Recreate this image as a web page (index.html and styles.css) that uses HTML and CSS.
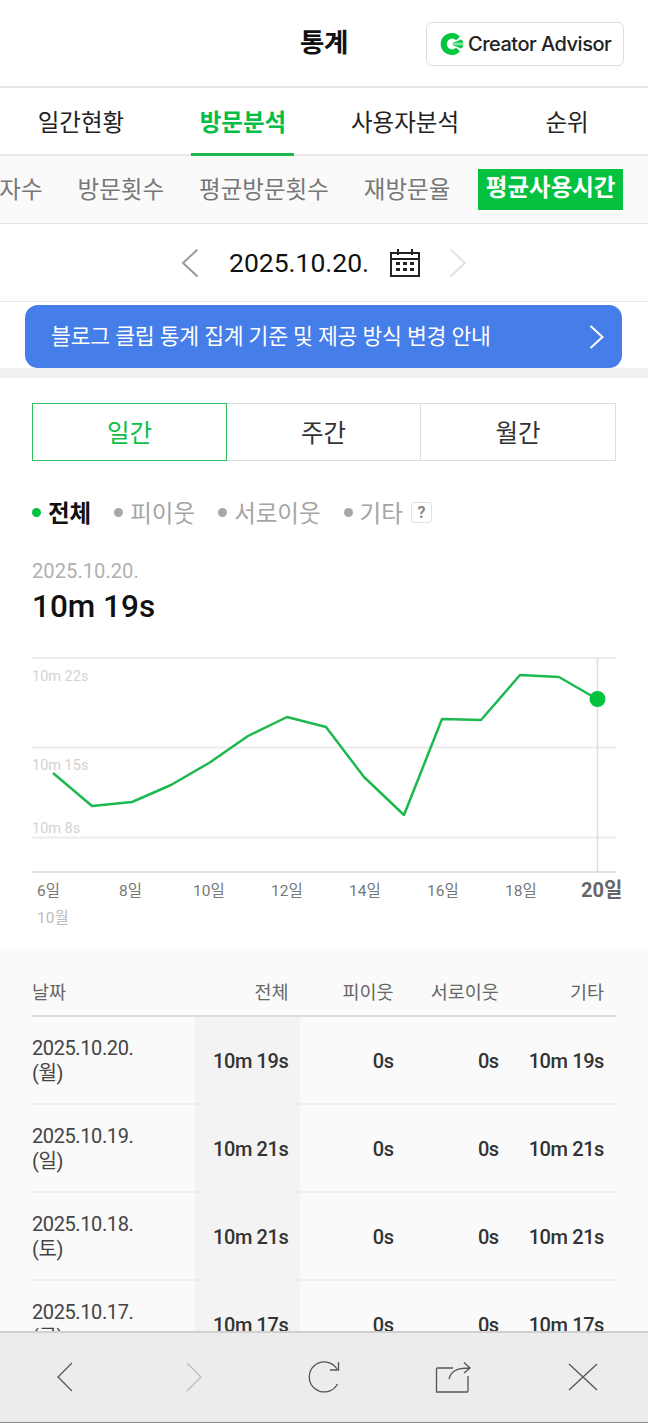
FILE: index.html
```html
<!DOCTYPE html>
<html lang="ko">
<head>
<meta charset="utf-8">
<title>통계</title>
<link rel="stylesheet" href="styles.css">
</head>
<body>
<header class="top">
  <h1 class="title">통계</h1>
  <a class="advisor">
    <svg class="advisor-logo" viewBox="0 0 24 24" width="24" height="24"><path d="M20 4.800A11 11 0 1 0 20 19.200L16 15.800A5.400 5.400 0 1 1 16 8.200Z" fill="#00c73c"/><path d="M12.500 10.800H23V9.400L21.400 7.400ZM12.500 11.500H23.500V12.500H12.500ZM12.500 13.200 21.400 16.600 23 14.600V13.200Z" fill="#00c73c"/></svg>
    <span>Creator Advisor</span>
  </a>
</header>
<nav class="tabs">
  <a class="tab">일간현황</a>
  <a class="tab tab-on">방문분석</a>
  <a class="tab">사용자분석</a>
  <a class="tab">순위</a>
</nav>
<nav class="subtabs">
  <a class="sub">방문자수</a>
  <a class="sub">방문횟수</a>
  <a class="sub">평균방문횟수</a>
  <a class="sub">재방문율</a>
  <a class="sub sub-on">평균사용시간</a>
</nav>
<div class="datebar">
  <svg class="ico-prev" width="18" height="30" viewBox="0 0 18 30"><path d="M16.500 1.500 2 15l14.500 13.500" fill="none" stroke="#9a9a9a" stroke-width="2"/></svg>
  <span class="date">2025.10.20.</span>
  <svg class="ico-cal" width="30" height="29" viewBox="0 0 30 29"><path d="M1 5h28v23H1zM1 11h28M8 1v6M22 1v6" fill="none" stroke="#222" stroke-width="2"/><path d="M6 14h4v3H6zM13 14h4v3h-4zM20 14h4v3h-4zM6 20h4v3H6zM13 20h4v3h-4zM20 20h4v3h-4z" fill="#222"/></svg>
  <svg class="ico-next" width="18" height="30" viewBox="0 0 18 30"><path d="M1.500 1.500 16 15 1.500 28.500" fill="none" stroke="#e2e2e2" stroke-width="2"/></svg>
</div>
<a class="banner">
  <span>블로그 클립 통계 집계 기준 및 제공 방식 변경 안내</span>
  <svg width="15" height="24" viewBox="0 0 15 24"><path d="M1.500 1 13.500 12 1.500 23" fill="none" stroke="#fff" stroke-width="2"/></svg>
</a>
<main class="panel">
  <div class="seg">
    <a class="seg-item seg-on">일간</a>
    <a class="seg-item">주간</a>
    <a class="seg-item">월간</a>
  </div>
  <ul class="legend">
    <li class="leg leg-on">전체</li>
    <li class="leg">피이웃</li>
    <li class="leg">서로이웃</li>
    <li class="leg">기타<span class="help">?</span></li>
  </ul>
  <p class="stat-date">2025.10.20.</p>
  <p class="stat-value">10m 19s</p>
  <svg class="chart" width="648" height="298" viewBox="0 650 648 298">
    <g class="grid">
      <path d="M32 658H616M32 747.500H616M32 837.500H616"/>
    </g>
    <path class="axis" d="M32 872H616"/>
    <path class="cursor" d="M597.500 658V872"/>
    <g class="ylab">
      <text x="32" y="681">10m 22s</text>
      <text x="32" y="770">10m 15s</text>
      <text x="32" y="833">10m 8s</text>
    </g>
    <polyline class="line" points="53,773 92,806 132,802 171,785 209,763 248,736 287,717 326,727 364,777 404,815 442,719 481,720 520,675 559,677 597,699"/>
    <circle class="dot" cx="597.500" cy="699" r="8"/>
    <g class="xlab">
      <text x="37" y="896">6일</text>
      <text x="119" y="896">8일</text>
      <text x="193" y="896">10일</text>
      <text x="271" y="896">12일</text>
      <text x="349" y="896">14일</text>
      <text x="427" y="896">16일</text>
      <text x="505" y="896">18일</text>
    </g>
    <text class="xlab-on" x="581" y="897">20일</text>
    <text class="xlab-month" x="37" y="923">10월</text>
  </svg>
</main>
<section class="stats">
  <table class="table">
    <colgroup><col class="c-date"><col class="c-num"><col class="c-num"><col class="c-num"><col class="c-num"></colgroup>
    <thead>
      <tr><th class="th-date">날짜</th><th>전체</th><th>피이웃</th><th>서로이웃</th><th>기타</th></tr>
    </thead>
    <tbody>
      <tr><td class="td-date">2025.10.20.<br>(월)</td><td class="td-all">10m 19s</td><td>0s</td><td>0s</td><td>10m 19s</td></tr>
      <tr><td class="td-date">2025.10.19.<br>(일)</td><td class="td-all">10m 21s</td><td>0s</td><td>0s</td><td>10m 21s</td></tr>
      <tr><td class="td-date">2025.10.18.<br>(토)</td><td class="td-all">10m 21s</td><td>0s</td><td>0s</td><td>10m 21s</td></tr>
      <tr><td class="td-date">2025.10.17.<br>(금)</td><td class="td-all">10m 17s</td><td>0s</td><td>0s</td><td>10m 17s</td></tr>
    </tbody>
  </table>
</section>
<footer class="toolbar">
  <svg width="18" height="30" viewBox="0 0 18 30"><path d="M16 1 2 15l14 14" fill="none" stroke="#555" stroke-width="1.300"/></svg>
  <svg width="18" height="30" viewBox="0 0 18 30"><path d="M2 1l14 14L2 29" fill="none" stroke="#bbb" stroke-width="1.300"/></svg>
  <svg class="ico-refresh" width="34" height="32" viewBox="0 0 34 32"><path d="M29 8A15 15 0 1 0 29.500 23" fill="none" stroke="#555" stroke-width="1.300"/><path d="M30.500 1V9H22" fill="none" stroke="#555" stroke-width="1.300"/></svg>
  <svg width="36" height="32" viewBox="0 0 36 32"><path d="M18 7H2.500a1 1 0 0 0-1 1V31H32a1 1 0 0 0 1-1V15" fill="none" stroke="#555" stroke-width="1.300"/><path d="M14 18C16 10 22 7 34 7M29 1.500 35 7l-6 5" fill="none" stroke="#555" stroke-width="1.300"/></svg>
  <svg width="30" height="28" viewBox="0 0 30 28"><path d="M1 1l28 26M29 1 1 27" fill="none" stroke="#555" stroke-width="1.300"/></svg>
</footer>
</body>
</html>
```
FILE: styles.css
```css
* { box-sizing: border-box; }
html, body { margin: 0; padding: 0; height: 100%; overflow: hidden; }
body {
  background: #fff;
  color: #111;
  font-family: Roboto, "Noto Sans CJK KR", sans-serif;
}
.top {
  position: relative;
  height: 88px;
  display: flex;
  align-items: center;
  justify-content: center;
  border-bottom: 2px solid #e4e4e4;
}
.title {
  margin: 0 0 6px;
  font-size: 26.500px;
  font-weight: 700;
  letter-spacing: -0.3px;
  color: #111;
}
.advisor {
  position: absolute;
  left: 426px;
  top: 22px;
  width: 198px;
  height: 44px;
  display: flex;
  align-items: center;
  gap: 4px;
  padding-left: 13px;
  border: 1px solid #ddd;
  border-radius: 6px;
  font-family: Inter, sans-serif;
  font-size: 20px;
  font-weight: 500;
  letter-spacing: -0.5px;
  color: #222;
  white-space: nowrap;
}
.tabs {
  height: 68px;
  display: grid;
  grid-template-columns: 162px 162px 162px 162px;
  border-bottom: 2px solid #e8e8e8;
}
.tab {
  position: relative;
  display: flex;
  align-items: center;
  justify-content: center;
  font-size: 23.500px;
  color: #222;
}
.tab-on {
  font-weight: 700;
  color: #03bd49;
}
.tab-on::after {
  content: "";
  position: absolute;
  left: 29px;
  width: 103px;
  bottom: -2px;
  height: 3px;
  background: #1fb84f;
}
.subtabs {
  height: 68px;
  display: flex;
  align-items: center;
  justify-content: flex-end;
  gap: 35px;
  padding-right: 25px;
  background: #fafafa;
  border-bottom: 1px solid #e6e6e6;
  overflow: hidden;
  white-space: nowrap;
}
.sub {
  flex: none;
  margin-bottom: 4px;
  font-size: 23.500px;
  color: #777;
}
.sub-on {
  margin: 0 0 0 -7px;
  padding: 0 7.500px;
  height: 41px;
  line-height: 39px;
  background: #04c13f;
  color: #fff;
  font-weight: 700;
}
.datebar {
  height: 78px;
  display: flex;
  align-items: center;
  border-bottom: 1px solid #e8e8e8;
  padding: 0 0 0 181px;
}
.date {
  margin: 0 21px 0 30px;
  font-size: 26.500px;
  color: #111;
}
.ico-next { margin-left: 29px; }
.banner {
  display: flex;
  align-items: center;
  justify-content: space-between;
  margin: 3px 26px 0 25px;
  height: 63px;
  padding: 0 18px 0 26px;
  border-radius: 13px;
  background: #457de9;
  color: #fff;
  font-size: 21.600px;
  letter-spacing: -0.2px;
}
.banner span { margin-bottom: 4px; }
.panel {
  height: 580px;
  border-top: 10px solid #f0f0f0;
  padding-top: 25px;
}
.seg {
  display: grid;
  grid-template-columns: 195px 194px 195px;
  margin: 0 32px;
  height: 58px;
}
.seg-item {
  display: flex;
  align-items: center;
  justify-content: center;
  padding-bottom: 2px;
  border: 1.500px solid #dcdcdc;
  border-left-width: 0;
  font-size: 24.500px;
  color: #333;
}
.seg-on {
  border: 1.500px solid #2fc05c;
  color: #0cbf47;
}
.legend {
  display: flex;
  margin: 31px 0 0 32px;
  padding: 0;
  list-style: none;
  height: 40px;
  align-items: center;
  gap: 23px;
}
.leg {
  display: flex;
  align-items: center;
  font-size: 23.500px;
  color: #a5a5a5;
}
.leg::before {
  content: "";
  width: 9px;
  height: 9px;
  margin-right: 7px;
  border-radius: 50%;
  background: #a8a8a8;
}
.leg-on { color: #111; font-weight: 700; }
.leg-on::before { background: #04c13f; }
.help {
  width: 21px;
  height: 21px;
  margin-left: 8px;
  border: 1px solid #e2e2e2;
  border-radius: 3px;
  text-align: center;
  line-height: 19px;
  font-size: 16px;
  font-weight: 700;
  color: #888;
}
.stat-date {
  margin: 27px 0 0 32px;
  height: 24px;
  line-height: 24px;
  font-size: 20.200px;
  color: #b0b0b0;
}
.stat-value {
  margin: 6px 0 0 32px;
  height: 36px;
  line-height: 36px;
  font-size: 31.500px;
  font-weight: 500;
  color: #111;
}
.chart { display: block; margin-top: 25px; }
.grid path { stroke: #ececec; stroke-width: 2; fill: none; }
.axis { stroke: #e0e0e0; stroke-width: 2; fill: none; }
.cursor { stroke: #dcdcdc; stroke-width: 1.500; fill: none; }
.ylab text { font-size: 14.500px; fill: #d2d2d2; }
.line { fill: none; stroke: #1cb94e; stroke-width: 2.500; stroke-linejoin: round; }
.dot { fill: #04c13f; }
.xlab text { font-size: 15.500px; fill: #777; }
.xlab-on { font-size: 20px; font-weight: 700; fill: #666; }
.xlab-month { font-size: 15.500px; fill: #bcbcbc; }
.stats {
  height: 500px;
  background: #fafafa;
  padding: 19px 32px 0;
}
.table {
  width: 584px;
  table-layout: fixed;
  border-collapse: collapse;
}
.c-date { width: 163px; }
.c-num { width: 105px; }
.table th {
  height: 49px;
  padding: 0 12px 0 0;
  border-bottom: 2px solid #dcdcdc;
  text-align: right;
  font-size: 18.500px;
  font-weight: 400;
  color: #666;
}
.table th.th-date { text-align: left; }
.table td {
  height: 88px;
  padding: 2px 12px 0 0;
  border-bottom: 2px solid #efefef;
  text-align: right;
  font-size: 20px;
  font-weight: 500;
  letter-spacing: -0.4px;
  color: #333;
}
.table td.td-date {
  text-align: left;
  font-weight: 400;
  line-height: 25px;
  color: #444;
}
.table td.td-all { background: #f3f3f3; }
.toolbar {
  position: fixed;
  left: 0;
  right: 0;
  bottom: 0;
  height: 92px;
  display: grid;
  grid-template-columns: 129px 129px 130px 130px 130px;
  align-items: center;
  justify-items: center;
  padding-bottom: 2px;
  background: #ececec;
  border-top: 2px solid #d0d0d0;
  border-bottom: 1px solid #888;
}
.ico-refresh { margin-left: 3px; }
```
